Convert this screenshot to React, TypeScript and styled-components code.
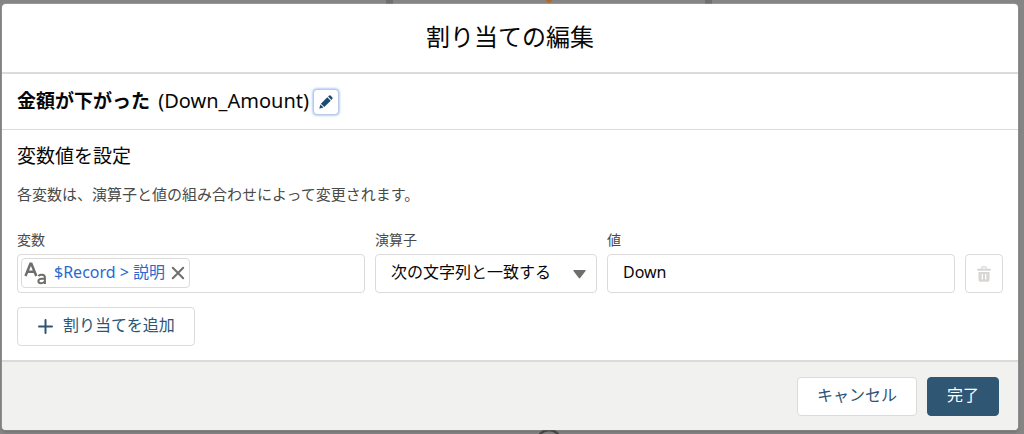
import React from "react";
import styled, { createGlobalStyle, css } from "styled-components";

const GlobalStyle = createGlobalStyle`
  *, *::before, *::after { box-sizing: border-box; }
  body {
    margin: 0;
    background: #858585;
    color: #080707;
    font-family: "Noto Sans", "Noto Sans CJK JP", sans-serif;
    font-size: 14px;
    line-height: 20px;
  }
  h1, h2, h3, p { margin: 0; font-weight: 400; }
  button, input, select { font: inherit; color: inherit; margin: 0; }
`;

const Backdrop = styled.div`
  position: relative;
  min-height: 100vh;
  overflow: hidden;
  padding: 4px 6px 4px 2px;
  background: #858585;
`;

const CanvasBar = styled.span<{ $left: string }>`
  position: absolute;
  top: 0;
  left: ${(p) => p.$left};
  width: 7px;
  height: 4px;
  background: #706e6e;
`;

const CanvasDrawing = styled.svg<{ $edge: "top" | "bottom"; $left: string }>`
  position: absolute;
  left: ${(p) => p.$left};
  ${(p) => p.$edge}: 0;
`;

const Dialog = styled.section`
  position: relative;
  display: flex;
  flex-direction: column;
  background: #fff;
  border-radius: 4px;
  box-shadow: 0 2px 3px rgba(0, 0, 0, 0.16), 0 0 0 1px rgba(255, 255, 255, 0.15);
`;

const Header = styled.header`
  padding: 15px 15px 17px;
  border-bottom: 2px solid #dddbda;
  text-align: center;
`;

const Title = styled.h1`
  font-size: 24px;
  line-height: 36px;
`;

const NameBar = styled.div`
  display: flex;
  align-items: center;
  gap: 4px;
  padding: 13px 15px 14px;
  border-bottom: 1px solid #dddbda;
`;

const Name = styled.h2`
  font-size: 20px;
  line-height: 28px;
`;

const Label = styled.strong`
  margin-right: 3px;
  font-size: 19px;
  font-weight: 700;
`;

const Body = styled.div`
  padding: 12px 15px 14px;
`;

const SectionTitle = styled.h3`
  font-size: 19px;
  line-height: 28px;
`;

const Hint = styled.p`
  padding: 14px 0 26px;
  color: #4a4a48;
  font-size: 15px;
`;

const Assignment = styled.div`
  display: grid;
  grid-template-columns: 348fr 222fr 348fr 38px;
  gap: 10px;
  align-items: end;
  margin-bottom: 14px;
`;

const Field = styled.div`
  display: flex;
  flex-direction: column;
  gap: 4px;
  min-width: 0;
`;

const FieldLabel = styled.label`
  color: #4a4a48;
`;

const box = css`
  height: 39px;
  border: 1px solid #dddbda;
  border-radius: 4px;
  background: #fff;
`;

const PillBox = styled.div`
  ${box}
  display: flex;
  align-items: center;
  padding: 0 3px 1px;
`;

const Pill = styled.span`
  display: flex;
  align-items: center;
  height: 30px;
  padding: 0 3px 0 2px;
  border: 1px solid #dddbda;
  border-radius: 4px;
`;

const PillLink = styled.a`
  margin: 0 5px 0 7px;
  padding-bottom: 2px;
  color: #2a6ace;
  font-size: 16px;
  text-decoration: none;
  white-space: nowrap;
`;

const PillInput = styled.input`
  flex: 1;
  min-width: 0;
  height: 30px;
  border: 0;
  outline: 0;
  background: transparent;
`;

const SelectWrap = styled.div`
  position: relative;
`;

const Select = styled.select`
  ${box}
  width: 100%;
  padding: 0 32px 4px 15px;
  font-size: 16px;
  appearance: none;
`;

const Arrow = styled.svg`
  position: absolute;
  right: 11px;
  top: 16px;
  pointer-events: none;
`;

const TextInput = styled.input`
  ${box}
  width: 100%;
  padding: 0 15px 4px;
  font-size: 16px;
`;

const Button = styled.button<{ $primary?: boolean }>`
  ${box}
  display: inline-flex;
  align-items: center;
  gap: 10px;
  padding: 0 19px 3px;
  color: #2d5474;
  font-size: 16px;
  ${(p) =>
    p.$primary &&
    css`
      border-color: #2f5673;
      background: #2f5673;
      color: #fff;
    `}
`;

const IconButton = styled.button<{ $kind: "bare" | "focus" | "box" }>`
  display: inline-flex;
  align-items: center;
  justify-content: center;
  padding: 0;
  border: 0;
  background: transparent;
  ${(p) => p.$kind === "bare" && "width: 16px; height: 20px;"}
  ${(p) =>
    p.$kind === "focus" &&
    css`
      width: 26px;
      height: 26px;
      margin-top: 2px;
      border: 1px solid #b9cae6;
      border-radius: 4px;
      background: #fff;
      box-shadow: 0 0 3px #6f9fe8;
    `}
  ${(p) => p.$kind === "box" && box}
`;

const Footer = styled.footer`
  display: flex;
  justify-content: flex-end;
  gap: 10px;
  padding: 15px 19px 14px;
  border-top: 2px solid #dddbda;
  border-radius: 0 0 4px 4px;
  background: #f1f1f0;
`;

const PencilIcon = () => (
  <svg width="14" height="14" viewBox="0 0 14 14" fill="#1b4b70" aria-hidden="true">
    <path d="M1.9 8.7 8.3 2.3l3.4 3.4-6.4 6.4z" />
    <path d="M9.1 1.6 10.2.6q.7-.5 1.300 0l1.900 1.900q.5.7 0 1.300l-1 1.100z" />
    <path d="M1.400 9.500 4.500 12.600.9 13.600q-.6.1-.5-.5z" />
  </svg>
);

const TextTypeIcon = () => (
  <svg width="23" height="23" viewBox="0 0 23 23" fill="none" stroke="#706e6b" aria-hidden="true">
    <path d="M1.5 14 6.4 1.8h1L12.3 14M3.3 9.8h7.2" strokeWidth="2.5" />
    <path d="M14.4 13.9q1.5-1.3 3.6-1.2 2.9.1 2.9 2.8V22M20.9 16.7h-3q-3.5.1-3.5 2.3 0 2.2 2.5 2.2 2.6 0 4-2" strokeWidth="2" />
  </svg>
);

const CloseIcon = () => (
  <svg width="14" height="14" viewBox="0 0 14 14" stroke="#706e6b" strokeWidth="2" strokeLinecap="round" aria-hidden="true">
    <path d="M1.8 1.8l10.4 10.4M12.2 1.8 1.8 12.2" />
  </svg>
);

const PlusIcon = () => (
  <svg width="16" height="18" viewBox="0 0 16 18" stroke="#2d5474" strokeWidth="2" strokeLinecap="round" aria-hidden="true">
    <path d="M8.500 4v13M2 10.500h13" />
  </svg>
);

const TrashIcon = () => (
  <svg width="14" height="16" viewBox="0 0 14 16" aria-hidden="true">
    <path d="M4.8 3.2V1.7q0-.9.9-.9h2.6q.9 0 .9.9v1.5" fill="none" stroke="#d8d6d4" strokeWidth="1.3" />
    <rect y="2.8" width="14" height="2" rx="0.8" fill="#d8d6d4" />
    <path
      d="M1.5 6h11v8q0 1.8-1.8 1.8H3.3Q1.5 15.8 1.5 14zM4.7 8v5.5h1.3V8zM8 8v5.5h1.3V8z"
      fill="#d8d6d4"
      fillRule="evenodd"
    />
  </svg>
);

export default function App() {
  return (
    <>
      <GlobalStyle />
      <Backdrop>
        <CanvasBar $left="37.7%" />
        <CanvasBar $left="68.8%" />
        <CanvasDrawing $edge="top" $left="52.9%" width="14" height="4" viewBox="0 0 14 4" aria-hidden="true">
          <path d="M0-4h14L8.5 2.2q-1.5 1.2-3 0z" fill="#b06a23" />
        </CanvasDrawing>
        <CanvasDrawing $edge="bottom" $left="52.2%" width="28" height="5" viewBox="0 0 28 5" aria-hidden="true">
          <circle cx="14" cy="13" r="12" fill="none" stroke="#4a4a4a" strokeWidth="2.5" />
        </CanvasDrawing>

        <Dialog role="dialog" aria-labelledby="dialog-title">
          <Header>
            <Title id="dialog-title">割り当ての編集</Title>
          </Header>

          <NameBar>
            <Name>
              <Label>金額が下がった</Label> (Down_Amount)
            </Name>
            <IconButton $kind="focus" type="button" aria-label="編集">
              <PencilIcon />
            </IconButton>
          </NameBar>

          <Body>
            <SectionTitle>変数値を設定</SectionTitle>
            <Hint>各変数は、演算子と値の組み合わせによって変更されます。</Hint>

            <Assignment>
              <Field>
                <FieldLabel htmlFor="variable">変数</FieldLabel>
                <PillBox>
                  <Pill>
                    <TextTypeIcon />
                    <PillLink href="#variable">$Record &gt; 説明</PillLink>
                    <IconButton $kind="bare" type="button" aria-label="削除">
                      <CloseIcon />
                    </IconButton>
                  </Pill>
                  <PillInput id="variable" />
                </PillBox>
              </Field>
              <Field>
                <FieldLabel htmlFor="operator">演算子</FieldLabel>
                <SelectWrap>
                  <Select id="operator">
                    <option>次の文字列と一致する</option>
                  </Select>
                  <Arrow width="13" height="9" viewBox="0 0 13 9" fill="#706e6b" aria-hidden="true">
                    <path d="M.8 0h11.4q.9.2.3 1L7.2 8q-.7.8-1.4 0L.5 1q-.6-.8.3-1z" />
                  </Arrow>
                </SelectWrap>
              </Field>
              <Field>
                <FieldLabel htmlFor="value">値</FieldLabel>
                <TextInput id="value" defaultValue="Down" />
              </Field>
              <IconButton $kind="box" type="button" disabled aria-label="割り当てを削除">
                <TrashIcon />
              </IconButton>
            </Assignment>

            <Button type="button">
              <PlusIcon />
              割り当てを追加
            </Button>
          </Body>

          <Footer>
            <Button type="button">キャンセル</Button>
            <Button type="button" $primary>
              完了
            </Button>
          </Footer>
        </Dialog>
      </Backdrop>
    </>
  );
}
